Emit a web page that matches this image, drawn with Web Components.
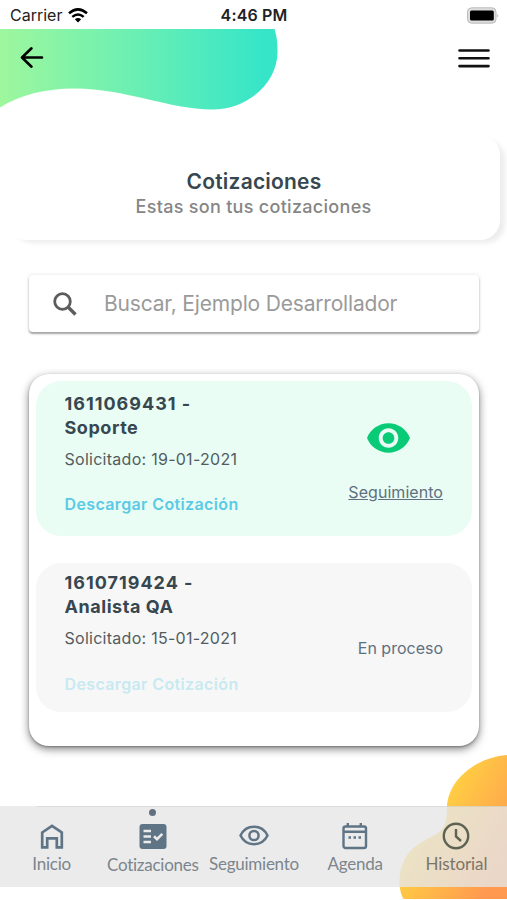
<!DOCTYPE html>
<html lang="es">
<head>
<meta charset="UTF-8">
<meta name="viewport" content="width=device-width, initial-scale=1.0">
<title>Cotizaciones</title>
<style>
    body {
        margin: 0;
        background: #fff;
        font-family: Inter, 'Liberation Sans', sans-serif;
        color: #37474f;
    }
</style>
</head>
<body>
<quote-app>
    <status-bar slot="status"></status-bar>
    <top-bar slot="top"></top-bar>
    <page-heading>
        Cotizaciones
        <span slot="subtitle">Estas son tus cotizaciones</span>
    </page-heading>
    <search-box placeholder="Buscar, Ejemplo Desarrollador"></search-box>
    <quote-list>
        <quote-card active>
            <span slot="number">1611069431 -</span>
            <span slot="name">Soporte</span>
            <span slot="date">Solicitado: 19-01-2021</span>
            <span slot="status">Seguimiento</span>
        </quote-card>
        <quote-card>
            <span slot="number">1610719424 -</span>
            <span slot="name">Analista QA</span>
            <span slot="date">Solicitado: 15-01-2021</span>
            <span slot="status">En proceso</span>
        </quote-card>
    </quote-list>
    <tab-bar slot="tabs">
        <tab-item icon="home">Inicio</tab-item>
        <tab-item icon="quotes" selected>Cotizaciones</tab-item>
        <tab-item icon="eye">Seguimiento</tab-item>
        <tab-item icon="calendar">Agenda</tab-item>
        <tab-item icon="clock" class="warm">Historial</tab-item>
    </tab-bar>
</quote-app>

<script>
class QuoteApp extends HTMLElement {
    connectedCallback() {
        this.attachShadow({ mode: 'open' });
        this.shadowRoot.innerHTML = `
            <style>
                :host {
                    display: flex;
                    flex-direction: column;
                    position: relative;
                    height: 900px;
                    overflow: hidden;
                }

                main {
                    flex: 1;
                    min-height: 0;
                }

                .blob {
                    position: absolute;
                    right: 0;
                    bottom: 1px;
                }

                .tabs {
                    position: relative;
                    margin-bottom: 13px;
                }
            </style>
            <slot name="status"></slot>
            <slot name="top"></slot>
            <main><slot></slot></main>
            <svg class="blob" width="108" height="144" viewBox="399 755 108 144">
                <defs>
                    <linearGradient id="sun" gradientUnits="userSpaceOnUse" x1="425" y1="810" x2="506" y2="858">
                        <stop offset="0" stop-color="#ffd541"/>
                        <stop offset="1" stop-color="#ff9950"/>
                    </linearGradient>
                </defs>
                <path fill="url(#sun)" d="M508 755C476 757 448 780 447 807C447 820 446 829 435 835C420 843 399 850 399.500 885C400 890 401 895 404 900H508Z"/>
            </svg>
            <div class="tabs"><slot name="tabs"></slot></div>
        `;
    }
}

class StatusBar extends HTMLElement {
    connectedCallback() {
        this.attachShadow({ mode: 'open' });
        this.shadowRoot.innerHTML = `
            <style>
                :host {
                    display: grid;
                    grid-template-columns: 1fr auto 1fr;
                    align-items: center;
                    box-sizing: border-box;
                    height: 29px;
                    padding: 0 8px 0 10px;
                    font-size: 16px;
                    line-height: 29px;
                    color: #222;
                }

                .left {
                    display: flex;
                    align-items: center;
                    gap: 6px;
                }

                .left span,
                .time {
                    padding-top: 1px;
                }

                .time {
                    margin-right: 1px;
                    font-weight: 600;
                    letter-spacing: 0.150px;
                }

                .battery {
                    justify-self: end;
                }
            </style>
            <div class="left">
                <span>Carrier</span>
                <svg width="20" height="15" viewBox="0 0 20 15" fill="none" stroke="#000" stroke-width="2.500">
                    <path d="M1 5.300Q10-2.500 19 5.300M4.300 8.900Q10 4 15.700 8.900"/>
                    <path d="M6.800 11.300Q10 8.600 13.200 11.300L10 14.500Z" fill="#000" stroke="none"/>
                </svg>
            </div>
            <span class="time">4:46 PM</span>
            <svg class="battery" width="33" height="17" viewBox="0 0 33 17">
                <rect x="1.500" y=".8" width="28.500" height="15.400" rx="4" fill="#ddd" stroke="#bbb"/>
                <rect x="4" y="3.500" width="23.800" height="10" rx="1.500" fill="#000"/>
                <path d="M31.300 6.500Q33 8.500 31.300 10.500Z" fill="#aaa"/>
            </svg>
        `;
    }
}

class TopBar extends HTMLElement {
    connectedCallback() {
        this.attachShadow({ mode: 'open' });
        this.shadowRoot.innerHTML = `
            <style>
                :host {
                    display: block;
                    position: relative;
                    height: 106px;
                }

                .wave {
                    position: absolute;
                    top: 0;
                    left: 0;
                }

                nav {
                    display: flex;
                    justify-content: space-between;
                    align-items: center;
                    position: relative;
                    padding: 17px 17px 0 20px;
                }

                svg {
                    display: block;
                }
            </style>
            <svg class="wave" width="280" height="82" viewBox="0 29 280 82">
                <defs>
                    <linearGradient id="mint" x1="0" x2="1" y1="0" y2="0">
                        <stop offset="0" stop-color="#9ef79d"/>
                        <stop offset=".5" stop-color="#69efb4"/>
                        <stop offset=".95" stop-color="#36e5c8"/>
                    </linearGradient>
                </defs>
                <path fill="url(#mint)" d="M0 29H274.500C277 38 277.500 42 277.500 52C277.500 82 249 109.500 212 109.500C170 109.500 125 88.500 75 88.500C45 88.500 20 95 0 107.500Z"/>
            </svg>
            <nav>
                <svg width="25" height="24" viewBox="0 0 25 24" fill="none" stroke="#000" stroke-width="2.600" stroke-linecap="round" stroke-linejoin="round">
                    <path d="M22 11.500H2.500M11.500 2.300L2 11.500L11.500 20.700"/>
                </svg>
                <svg width="32" height="24" viewBox="0 0 32 24" stroke="#111" stroke-width="2.600" stroke-linecap="round">
                    <path d="M1.500 4.500H30.500M1.500 12.300H30.500M1.500 20.100H30.500"/>
                </svg>
            </nav>
        `;
    }
}

class PageHeading extends HTMLElement {
    connectedCallback() {
        this.attachShadow({ mode: 'open' });
        this.shadowRoot.innerHTML = `
            <style>
                :host {
                    display: flex;
                    flex-direction: column;
                    align-items: center;
                    box-sizing: border-box;
                    height: 105px;
                    margin: 0 7px 0 7px;
                    padding-top: 34px;
                    border-radius: 20px;
                    background: #fff;
                    box-shadow: 6px 4px 5px -1px rgba(0, 0, 0, 0.075);
                    text-align: center;
                }

                h1 {
                    margin: 0 0 0 1px;
                    font-size: 21px;
                    font-weight: 600;
                    line-height: 25px;
                    letter-spacing: 0.2px;
                }

                p {
                    margin: 0;
                    font-size: 18px;
                    font-weight: 500;
                    line-height: 25px;
                    letter-spacing: 0.3px;
                    color: #858585;
                }
            </style>
            <h1><slot></slot></h1>
            <p><slot name="subtitle"></slot></p>
        `;
    }
}

class SearchBox extends HTMLElement {
    connectedCallback() {
        this.attachShadow({ mode: 'open' });
        this.shadowRoot.innerHTML = `
            <style>
                :host {
                    display: flex;
                    align-items: center;
                    box-sizing: border-box;
                    height: 57px;
                    margin: 35px 28px 0 29px;
                    padding-left: 23px;
                    gap: 26px;
                    border-radius: 4px;
                    background: #fff;
                    box-shadow: 0 2px 2px rgba(0, 0, 0, 0.32), 0 0 4px rgba(0, 0, 0, 0.12);
                }

                span {
                    padding-top: 1px;
                    font-size: 21px;
                    line-height: 56px;
                    letter-spacing: -0.180px;
                    color: #9a9a9a;
                }
            </style>
            <svg width="26" height="26" viewBox="0 0 26 26" fill="none" stroke="#5c5c5c">
                <circle cx="10.500" cy="10.500" r="7.800" stroke-width="2.800"/>
                <path d="M16 16L23.500 23.500" stroke-width="3.400"/>
            </svg>
            <span>${this.getAttribute('placeholder')}</span>
        `;
    }
}

class QuoteList extends HTMLElement {
    connectedCallback() {
        this.attachShadow({ mode: 'open' });
        this.shadowRoot.innerHTML = `
            <style>
                :host {
                    display: flex;
                    flex-direction: column;
                    gap: 27px;
                    box-sizing: border-box;
                    height: 372px;
                    margin: 42px 28px 0 29px;
                    padding: 7px;
                    border-radius: 20px;
                    background: #fff;
                    box-shadow: 0 3px 8px rgba(0, 0, 0, 0.5), 0 1px 2px rgba(0, 0, 0, 0.25);
                }
            </style>
            <slot></slot>
        `;
    }
}

class QuoteCard extends HTMLElement {
    connectedCallback() {
        const active = this.hasAttribute('active');
        const eye = `
            <svg width="43" height="30" viewBox="1 4.500 22 15" fill="#09cb77">
                <path d="M12 4.500C7 4.500 2.730 7.610 1 12c1.730 4.390 6 7.500 11 7.500s9.270-3.110 11-7.500c-1.730-4.390-6-7.500-11-7.500zM12 17c-2.760 0-5-2.240-5-5s2.240-5 5-5 5 2.240 5 5-2.240 5-5 5zm0-8c-1.660 0-3 1.340-3 3s1.340 3 3 3 3-1.340 3-3-1.340-3-3-3z"/>
            </svg>`;
        this.attachShadow({ mode: 'open' });
        this.shadowRoot.innerHTML = `
            <style>
                :host {
                    display: flex;
                    justify-content: space-between;
                    box-sizing: border-box;
                    height: 149px;
                    padding: 8px 29px 0 28.500px;
                    border-radius: 25px;
                    background: #f7f7f7;
                }

                :host([active]) {
                    height: 155px;
                    padding-top: 11px;
                    background: #e9fdf4;
                }

                .title {
                    font-size: 18px;
                    font-weight: 700;
                    line-height: 24px;
                    letter-spacing: 0.550px;
                }

                .number {
                    letter-spacing: 1px;
                }

                .date {
                    margin-top: 8px;
                    font-size: 16px;
                    line-height: 23px;
                    letter-spacing: 0.270px;
                    color: #525c60;
                }

                .download {
                    margin-top: 23px;
                    font-size: 16px;
                    font-weight: 600;
                    line-height: 23px;
                    letter-spacing: 0.370px;
                    color: #5bcae5;
                    opacity: 0.3;
                }

                :host([active]) .download {
                    margin-top: 22px;
                    opacity: 1;
                }

                .side {
                    display: flex;
                    flex-direction: column;
                    align-items: flex-end;
                    padding-top: 65px;
                }

                :host([active]) .side {
                    padding-top: 31px;
                }

                .side svg {
                    margin-right: 33px;
                }

                .status {
                    font-size: 16px;
                    line-height: 24px;
                    color: #607080;
                }

                :host([active]) .status {
                    margin-top: 27px;
                    letter-spacing: 0.050px;
                    text-decoration: underline;
                }
            </style>
            <div>
                <div class="title number"><slot name="number"></slot></div>
                <div class="title"><slot name="name"></slot></div>
                <div class="date"><slot name="date"></slot></div>
                <div class="download">Descargar Cotización</div>
            </div>
            <div class="side">
                ${active ? eye : ''}
                <div class="status"><slot name="status"></slot></div>
            </div>
        `;
    }
}

class TabBar extends HTMLElement {
    connectedCallback() {
        this.attachShadow({ mode: 'open' });
        this.shadowRoot.innerHTML = `
            <style>
                :host {
                    display: grid;
                    grid-template-columns: repeat(5, 1fr);
                    box-sizing: border-box;
                    height: 81px;
                    padding-left: 1px;
                    background: rgba(230, 230, 230, 0.8);
                    font-family: Lato, sans-serif;
                }

                :host::before {
                    content: '';
                    position: absolute;
                    top: 0;
                    left: 36px;
                    right: 0;
                    height: 1px;
                    background: rgba(0, 0, 0, 0.06);
                }
            </style>
            <slot></slot>
        `;
    }
}

const TAB_ICONS = {
    home: `<path d="M5.200 12.500L15 5.800L24.800 12.500V27.300H19.800V18.300H10.200V27.300H5.200Z" stroke-width="2.700"/>`,
    quotes: `<rect x="1.500" y="4" width="27" height="25" rx="3" fill="currentColor" stroke="none"/>
        <path d="M5.500 11H13M5.500 16.500H13M5.500 22H13" stroke="#ebebeb" stroke-width="2.400"/>
        <path d="M16 16.300L19 19.200L24.300 13.800" stroke="#ebebeb" stroke-width="2.600"/>`,
    eye: `<path d="M1.500 15.500C7 3.800 23 3.800 28.500 15.500C23 27 7 27 1.500 15.500Z" stroke-width="2.500"/>
        <circle cx="15" cy="15.500" r="4.600" stroke-width="2.500"/>`,
    calendar: `<rect x="3.500" y="6.500" width="22.500" height="21.500" rx="2" stroke-width="2.400"/>
        <path d="M3.500 11.800H26M7.800 3V7M20.800 3V7" stroke-width="2.400"/>
        <path d="M8.500 17.500H11M13.500 17.500H16M18.500 17.500H21" stroke-width="2.600"/>`,
    clock: `<circle cx="15" cy="16" r="12.200" stroke-width="2.400"/>
        <path d="M15 9V16.500L20 21" stroke-width="2.400"/>`
};

class TabItem extends HTMLElement {
    connectedCallback() {
        this.attachShadow({ mode: 'open' });
        this.shadowRoot.innerHTML = `
            <style>
                :host {
                    display: flex;
                    flex-direction: column;
                    align-items: center;
                    position: relative;
                    padding-top: 14px;
                    color: #5f7485;
                }

                :host(.warm) {
                    color: #5e6252;
                }

                svg {
                    display: block;
                }

                span {
                    font-size: 17px;
                    line-height: 24px;
                    letter-spacing: -0.25px;
                    color: #7c858d;
                    white-space: nowrap;
                }

                :host([selected]) span {
                    padding-top: 1px;
                }

                :host(.warm) span {
                    letter-spacing: -0.08px;
                    color: #7c7568;
                }

                :host([selected])::before {
                    content: '';
                    position: absolute;
                    top: 3px;
                    width: 7px;
                    height: 7px;
                    border-radius: 50%;
                    background: #63717e;
                }
            </style>
            <svg width="30" height="32" viewBox="0 0 30 32" fill="none" stroke="currentColor">${TAB_ICONS[this.getAttribute('icon')]}</svg>
            <span><slot></slot></span>
        `;
    }
}

customElements.define('quote-app', QuoteApp);
customElements.define('status-bar', StatusBar);
customElements.define('top-bar', TopBar);
customElements.define('page-heading', PageHeading);
customElements.define('search-box', SearchBox);
customElements.define('quote-list', QuoteList);
customElements.define('quote-card', QuoteCard);
customElements.define('tab-bar', TabBar);
customElements.define('tab-item', TabItem);
</script>
</body>
</html>
